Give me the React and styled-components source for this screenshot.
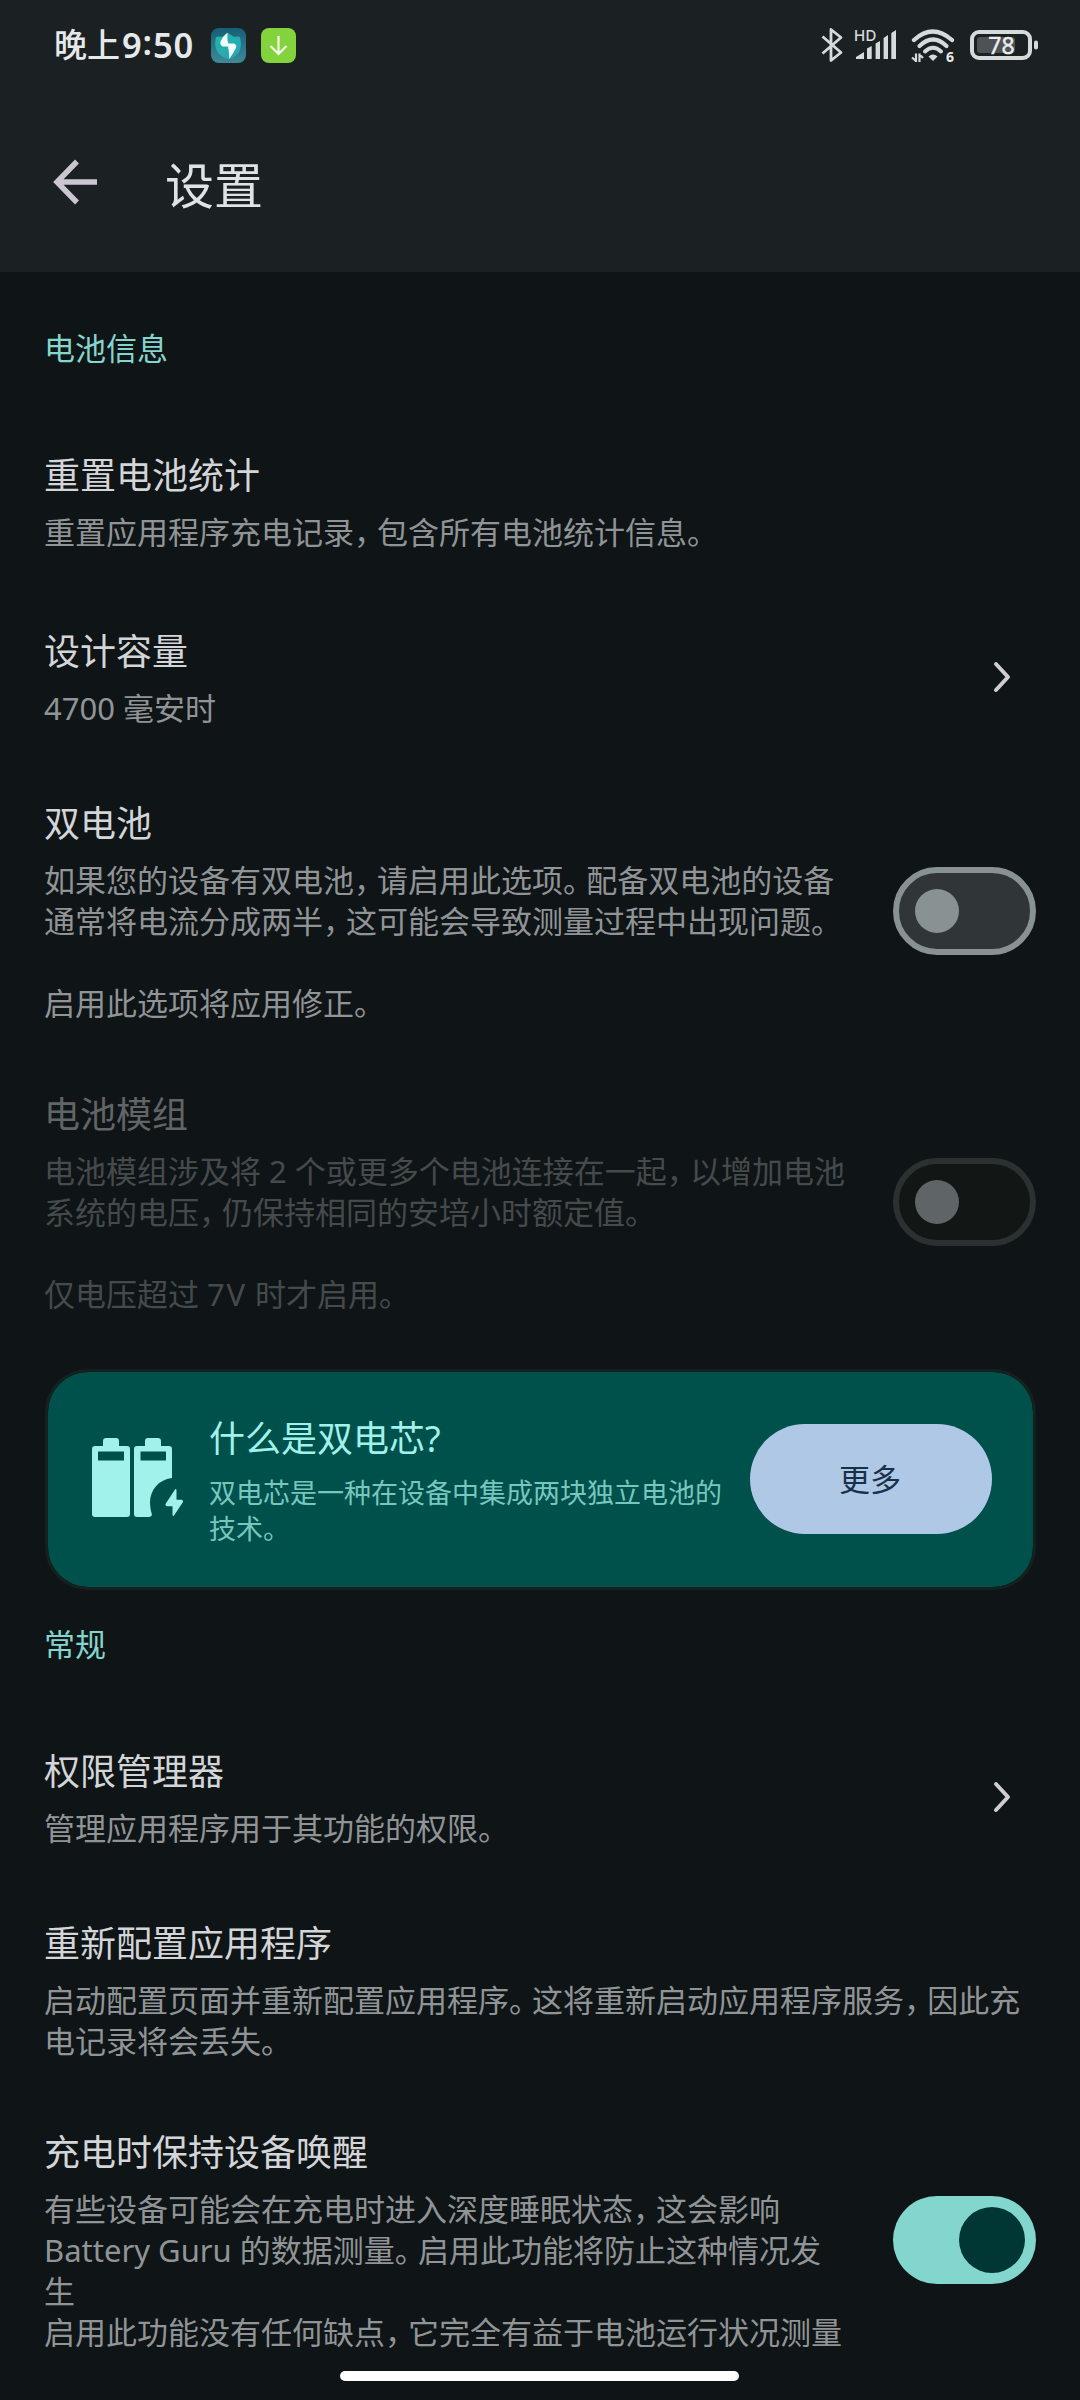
import React from "react";
import styled, { createGlobalStyle } from "styled-components";

const GlobalStyle = createGlobalStyle`
  * { box-sizing: border-box; }
  html, body { margin: 0; padding: 0; background: #0f1416; }
  body {
    font-family: "Noto Sans", "Noto Sans CJK SC", sans-serif;
    -webkit-font-smoothing: antialiased;
  }
`;

const Screen = styled.div`
  position: relative;
  width: 1080px;
  height: 2400px;
  overflow: hidden;
  background: #0f1416;
`;

const Header = styled.header`
  height: 272px;
  background: #1b2022;
`;

const StatusBar = styled.div`
  display: flex;
  align-items: center;
  justify-content: space-between;
  height: 90px;
  padding: 0 41px 0 54px;
`;

const StatusGroup = styled.div`
  display: flex;
  align-items: center;
`;

const Clock = styled.div`
  display: flex;
  align-items: center;
  width: 157px;
  line-height: 50px;
  font-size: 33px;
  font-weight: 500;
  color: #e6e9e9;
  white-space: nowrap;
`;

const Digits = styled.span`
  font-size: 34.5px;
  font-weight: 600;
  letter-spacing: 0.8px;
  margin-left: 2px;
`;

const Colon = styled.span`
  position: relative;
  top: -3px;
`;

const AppBadge = styled.svg`
  display: block;
  margin-right: 15px;
`;

const StatusIcon = styled.svg`
  display: block;
  margin-left: ${(p) => p.$gap || 0}px;
`;

const TitleBar = styled.div`
  display: flex;
  align-items: center;
  height: 186px;
  padding: 0 0 0 53px;
`;

const BackIcon = styled.svg`
  display: block;
  margin-bottom: 2px;
`;

const PageTitle = styled.h1`
  margin: 3px 0 0 67px;
  font-size: 49px;
  line-height: 70px;
  font-weight: 400;
  color: #dfe3e5;
`;

const Main = styled.main`
  padding: 0 44px;
`;

const SectionTitle = styled.h2`
  margin: 0;
  padding-top: ${(p) => p.$top}px;
  font-size: 31px;
  line-height: 42px;
  font-weight: 400;
  color: #84d5cd;
`;

const Row = styled.section`
  display: flex;
  align-items: center;
  justify-content: space-between;
  margin-top: ${(p) => p.$top}px;
`;

const RowText = styled.div`
  opacity: ${(p) => (p.$disabled ? 0.42 : 1)};
`;

const RowTitle = styled.h3`
  margin: 0 0 11px;
  font-size: 36px;
  line-height: 51px;
  font-weight: 400;
  color: #d3d5d8;
  white-space: nowrap;
`;

const RowDesc = styled.p`
  margin: 0;
  font-size: 31px;
  line-height: 41px;
  color: #919497;
  white-space: pre;
`;

const Mark = styled.span`
  letter-spacing: -0.255em;
`;

const Wide = styled.span`
  letter-spacing: 1.8px;
`;

const Chevron = styled.svg`
  display: block;
  margin: 0 25px 2px 0;
`;

const Track = styled.div`
  display: flex;
  align-items: center;
  flex: none;
  width: 143px;
  height: 88px;
  border-radius: 44px;
  justify-content: ${(p) => (p.$on ? "flex-end" : "flex-start")};
  padding: 0 ${(p) => (p.$on ? 11 : 16)}px;
  border: ${(p) => (p.$on ? "0" : `6px solid ${p.$disabled ? "#2b3130" : "#899293"}`)};
  background: ${(p) => (p.$on ? "#83d6ce" : p.$disabled ? "#121716" : "#303638")};
`;

const Knob = styled.div`
  width: ${(p) => (p.$on ? 66 : 44)}px;
  height: ${(p) => (p.$on ? 66 : 44)}px;
  border-radius: 50%;
  background: ${(p) => (p.$on ? "#003735" : p.$disabled ? "#5f6566" : "#899293")};
`;

const Card = styled.section`
  display: flex;
  align-items: center;
  height: 221px;
  margin: 54px 0 0 1px;
  padding: 0 41px 0 44px;
  border: 3px solid #14211f;
  border-radius: 43px;
  background: #00504c;
  background-clip: padding-box;
`;

const CardIcon = styled.svg`
  display: block;
  margin-bottom: 4px;
`;

const CardText = styled.div`
  flex: 1;
  margin-left: 25px;
`;

const CardTitle = styled.h3`
  margin: 1px 0 10px;
  font-size: 36px;
  line-height: 52px;
  font-weight: 400;
  color: #a0f2ea;
`;

const CardDesc = styled.p`
  margin: 0;
  font-size: 27px;
  line-height: 36.5px;
  color: #78c7be;
  white-space: pre;
`;

const MoreButton = styled.button`
  flex: none;
  width: 242px;
  height: 110px;
  margin-bottom: 2px;
  padding: 0 2px 0 0;
  border: 0;
  border-radius: 55px;
  background: #aec8e6;
  color: #183049;
  font-family: inherit;
  font-size: 31px;
  line-height: 42px;
`;

const HomeIndicator = styled.div`
  position: absolute;
  left: 340px;
  top: 2371px;
  width: 399px;
  height: 10px;
  border-radius: 5px;
  background: #fff;
`;

/* Tightens full-width punctuation inside a line and opens up the voltage label. */
const Spaced = ({ children }) =>
  children.split(/([\uff0c\u3002]|7V)/).map((part, i) => {
    if (part === "7V") return <Wide key={i}>{part}</Wide>;
    return /^[\uff0c\u3002]$/.test(part) ? <Mark key={i}>{part}</Mark> : part;
  });

const Switch = ({ on, disabled }) => (
  <Track $on={on} $disabled={disabled} role="switch" aria-checked={!!on}>
    <Knob $on={on} $disabled={disabled} />
  </Track>
);

const ChevronRight = () => (
  <Chevron width="18" height="32" viewBox="0 0 18 32" fill="none" stroke="#cfcdd1" strokeWidth="4" strokeLinecap="round" strokeLinejoin="round">
    <path d="M3 3 L15 16 L3 29" />
  </Chevron>
);

const Setting = ({ top, title, desc, disabled, children }) => (
  <Row $top={top}>
    <RowText $disabled={disabled}>
      <RowTitle>{title}</RowTitle>
      <RowDesc>
        <Spaced>{desc}</Spaced>
      </RowDesc>
    </RowText>
    {children}
  </Row>
);

const GuruBadge = () => (
  <AppBadge width="35" height="35" viewBox="0 0 35 35">
    <defs>
      <linearGradient id="guru" x1="0" y1="0" x2="0" y2="1">
        <stop offset="0" stopColor="#155f77" />
        <stop offset="1" stopColor="#3f8a97" />
      </linearGradient>
      <linearGradient id="leaf" x1="0" y1="0" x2="1" y2="1">
        <stop offset="0" stopColor="#1fb8a0" />
        <stop offset="1" stopColor="#2ba3bd" />
      </linearGradient>
    </defs>
    <rect width="35" height="35" rx="8" fill="url(#guru)" />
    <path d="M5 9 Q8 8 11 9 L17 5 L23 9 Q26 8 29 9 C32 20 28 29 17.500 31 C7 29 2 20 5 9Z" fill="url(#leaf)" />
    <path d="M16.500 4.500 Q16 13 17.500 15.500 L23 15.500 Q26 16.500 25 20 Q22 26 18 31 Q18.500 24 17 18.500 L12 18.500 Q8.500 17 9.500 13.500 Q12 8 16.500 4.500Z" fill="#f1fbfd" />
  </AppBadge>
);

const DownloadBadge = () => (
  <AppBadge width="35" height="35" viewBox="0 0 35 35">
    <rect width="35" height="35" rx="8" fill="#82d33c" />
    <path d="M17.5 8 V25 M9.5 18 L17.5 26 L25.5 18" fill="none" stroke="#f4fbe9" strokeWidth="2.2" />
  </AppBadge>
);

const Bluetooth = () => (
  <StatusIcon width="22" height="36" viewBox="0 0 22 36" fill="none" stroke="#d5dada" strokeWidth="2.8" strokeLinejoin="round">
    <path d="M1.500 9.500 L20 25.500 L10 33.500 V2.500 L20 10.500 L1.500 26.500" />
  </StatusIcon>
);

const Signal = () => (
  <StatusIcon $gap={11} width="44" height="36" viewBox="0 0 44 36" fill="#d5dada">
    <text x="0" y="13.500" fontSize="15" fontWeight="500" letterSpacing="0.4" fontFamily="Inter, sans-serif">HD</text>
    <path d="M2 32 V30 L10 25 V32Z M13 21.500 L17.700 19 V32 H13Z M21.600 16.500 L26 14 V32 H21.600Z M29.600 11 L34 8 V32 H29.600Z M37.300 6 L42 3 V32 H37.300Z" />
  </StatusIcon>
);

const Wifi = () => (
  <StatusIcon $gap={12} width="46" height="36" viewBox="0 0 46 36" fill="none" stroke="#d5dada">
    <path d="M4 13 Q22.500 -4 42 13" strokeWidth="4.200" strokeLinecap="round" />
    <path d="M9.500 19 Q23 6 36.500 19" strokeWidth="4.200" strokeLinecap="round" />
    <path d="M15 24.500 Q23 17 31 24.500" strokeWidth="4" strokeLinecap="round" />
    <path d="M18.500 29.500 Q23 25.500 27.500 29.500 L23 34Z" fill="#d5dada" stroke="none" />
    <path d="M6 26.500 V35 M6 34 L2 30.500 M9.500 35 V26.500 M9.500 27.500 L13 31" strokeWidth="2.200" />
    <text x="36" y="34.500" fontSize="14" fontWeight="700" fontFamily="Noto Sans, sans-serif" fill="#e6e9e9" stroke="none">6</text>
  </StatusIcon>
);

const Battery = () => (
  <StatusIcon $gap={13} width="70" height="32" viewBox="0 0 70 32">
    <rect x="3" y="3" width="58" height="26" rx="7" fill="none" stroke="#d5dada" strokeWidth="4" />
    <rect x="8" y="8" width="38" height="16" rx="3" fill="#4e5254" />
    <rect x="65" y="11.500" width="4" height="9" rx="2" fill="#d5dada" />
    <text x="32.500" y="24.500" textAnchor="middle" fontSize="23" fontFamily="Noto Sans, sans-serif" fill="#eceeee" stroke="#eceeee" strokeWidth="0.400">78</text>
  </StatusIcon>
);

const DualBattery = () => (
  <CardIcon width="92" height="80" viewBox="0 0 92 80">
    <path
      fill="#a0f2ea"
      fillRule="evenodd"
      d="M3 8 H11 V3 Q11 0 14 0 H24 Q27 0 27 3 V8 H35 Q38 8 38 11 V76 Q38 79 35 79 H3 Q0 79 0 76 V11 Q0 8 3 8Z M6 13.500 V22.500 H32 V13.500Z"
    />
    <path
      fill="#a0f2ea"
      fillRule="evenodd"
      d="M45 8 H53 V3 Q53 0 56 0 H66 Q69 0 69 3 V8 H77 Q80 8 80 11 V40 C66 42 58 52 58 65 Q58 70 60 77 Q59 79 57 79 H45 Q42 79 42 76 V11 Q42 8 45 8Z M48.500 13.500 V22.500 H74 V13.500Z"
    />
    <path fill="#a0f2ea" d="M83 51.500 L73.500 66 Q73 68 75 68.200 H80.500 V77 Q81 78.500 82 77.500 L91 64 Q91.500 62 89.500 61.800 H84.500 V52 Q84 50.500 83 51.500Z" />
  </CardIcon>
);

export default function App() {
  return (
    <Screen>
      <GlobalStyle />
      <Header>
        <StatusBar>
          <StatusGroup>
            <Clock>
              晚上
              <Digits>
                9<Colon>:</Colon>50
              </Digits>
            </Clock>
            <GuruBadge />
            <DownloadBadge />
          </StatusGroup>
          <StatusGroup>
            <Bluetooth />
            <Signal />
            <Wifi />
            <Battery />
          </StatusGroup>
        </StatusBar>
        <TitleBar>
          <BackIcon width="45" height="46" viewBox="0 0 45 46" fill="none" stroke="#cbc6d2" strokeWidth="5.500">
            <path d="M24 2.500 L4 23 L24 43.500 M4 23 H44" />
          </BackIcon>
          <PageTitle>设置</PageTitle>
        </TitleBar>
      </Header>
      <Main>
        <SectionTitle $top={55}>电池信息</SectionTitle>
        <Setting top={81} title="重置电池统计" desc={"重置应用程序充电记录\uff0c包含所有电池统计信息。"} />
        <Setting top={73} title="设计容量" desc="4700 毫安时">
          <ChevronRight />
        </Setting>
        <Setting
          top={69}
          title="双电池"
          desc={"如果您的设备有双电池\uff0c请启用此选项。配备双电池的设备\n通常将电流分成两半\uff0c这可能会导致测量过程中出现问题。\n\n启用此选项将应用修正。"}
        >
          <Switch />
        </Setting>
        <Setting
          top={65}
          disabled
          title="电池模组"
          desc={"电池模组涉及将 2 个或更多个电池连接在一起\uff0c以增加电池\n系统的电压\uff0c仍保持相同的安培小时额定值。\n\n仅电压超过 7V 时才启用。"}
        >
          <Switch disabled />
        </Setting>
        <Card>
          <DualBattery />
          <CardText>
            <CardTitle>什么是双电芯?</CardTitle>
            <CardDesc>{"双电芯是一种在设备中集成两块独立电池的\n技术。"}</CardDesc>
          </CardText>
          <MoreButton>更多</MoreButton>
        </Card>
        <SectionTitle $top={33}>常规</SectionTitle>
        <Setting top={81} title="权限管理器" desc="管理应用程序用于其功能的权限。">
          <ChevronRight />
        </Setting>
        <Setting
          top={69}
          title="重新配置应用程序"
          desc={"启动配置页面并重新配置应用程序。这将重新启动应用程序服务\uff0c因此充\n电记录将会丢失。"}
        />
        <Setting
          top={65}
          title="充电时保持设备唤醒"
          desc={"有些设备可能会在充电时进入深度睡眠状态\uff0c这会影响\nBattery Guru 的数据测量。启用此功能将防止这种情况发\n生\n启用此功能没有任何缺点\uff0c它完全有益于电池运行状况测量"}
        >
          <Switch on />
        </Setting>
      </Main>
      <HomeIndicator />
    </Screen>
  );
}
